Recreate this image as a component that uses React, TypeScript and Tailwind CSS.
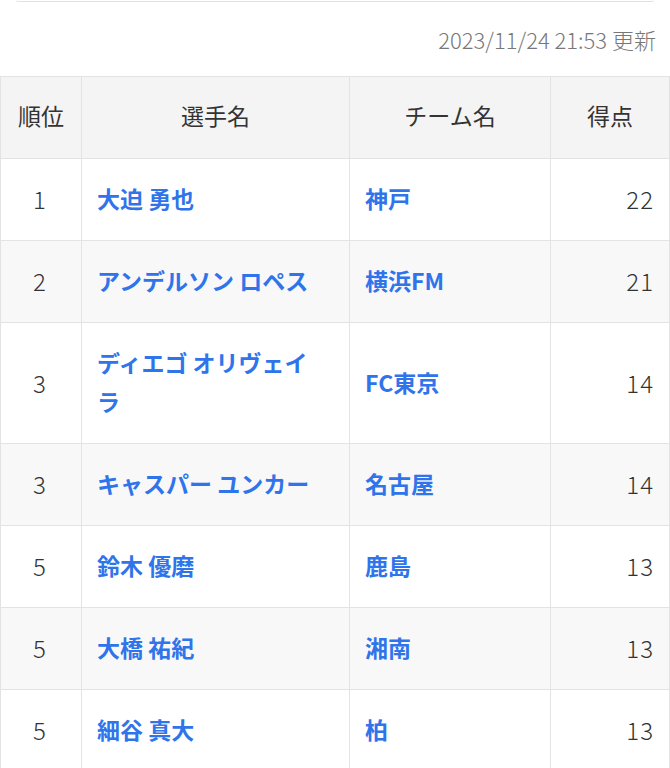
const rows = [
  { rank: 1, name: "大迫 勇也", team: "神戸", score: 22 },
  { rank: 2, name: "アンデルソン ロペス", team: "横浜FM", score: 21 },
  { rank: 3, name: "ディエゴ オリヴェイラ", team: "FC東京", score: 14 },
  { rank: 3, name: "キャスパー ユンカー", team: "名古屋", score: 14 },
  { rank: 5, name: "鈴木 優磨", team: "鹿島", score: 13 },
  { rank: 5, name: "大橋 祐紀", team: "湘南", score: 13 },
  { rank: 5, name: "細谷 真大", team: "柏", score: 13 },
]

export default function App() {
  return (
    <div
      className="w-[670px] bg-white text-[#333]"
      style={{ fontFamily: '"Noto Sans CJK JP", "Noto Sans", sans-serif' }}
    >
      {/* bottom edge of the card above */}
      <div className="mx-[16px] h-[2px] rounded-b-md border-b border-[#e2e2e2]" />

      <div className="flex h-[74px] items-center justify-end pr-[14px] text-[22px] font-light text-[#777]">
        2023/11/24 21:53 更新
      </div>

      <table className="w-full table-fixed border-collapse text-[23px]">
        <colgroup>
          <col className="w-[81px]" />
          <col className="w-[268px]" />
          <col className="w-[201px]" />
          <col />
        </colgroup>
        <thead>
          <tr className="bg-[#f4f4f4]">
            {["順位", "選手名", "チーム名", "得点"].map((h) => (
              <th
                key={h}
                className="border border-[#e3e3e3] pt-[19px] pb-[23px] text-center font-normal leading-[39px] text-[#333]"
              >
                {h}
              </th>
            ))}
          </tr>
        </thead>
        <tbody>
          {rows.map((r, i) => (
            <tr key={r.name} className={i % 2 === 1 ? "bg-[#f8f8f8]" : "bg-white"}>
              <td className="border border-[#e3e3e3] pt-[20px] pb-[22px] pr-[3px] text-center text-[24px] font-light leading-[39px]">
                {r.rank}
              </td>
              <td className="border border-[#e3e3e3] pt-[20px] pb-[22px] pl-[15px] pr-[28px] font-bold leading-[39px] text-[#2f74ea]">
                {r.name}
              </td>
              <td className="border border-[#e3e3e3] pt-[20px] pb-[22px] pl-[15px] font-bold leading-[39px] text-[#2f74ea]">
                {r.team}
              </td>
              <td className="border border-[#e3e3e3] pt-[20px] pb-[22px] pr-[15px] text-right text-[24px] font-light tracking-[1px] leading-[39px]">
                {r.score}
              </td>
            </tr>
          ))}
        </tbody>
      </table>
    </div>
  )
}
